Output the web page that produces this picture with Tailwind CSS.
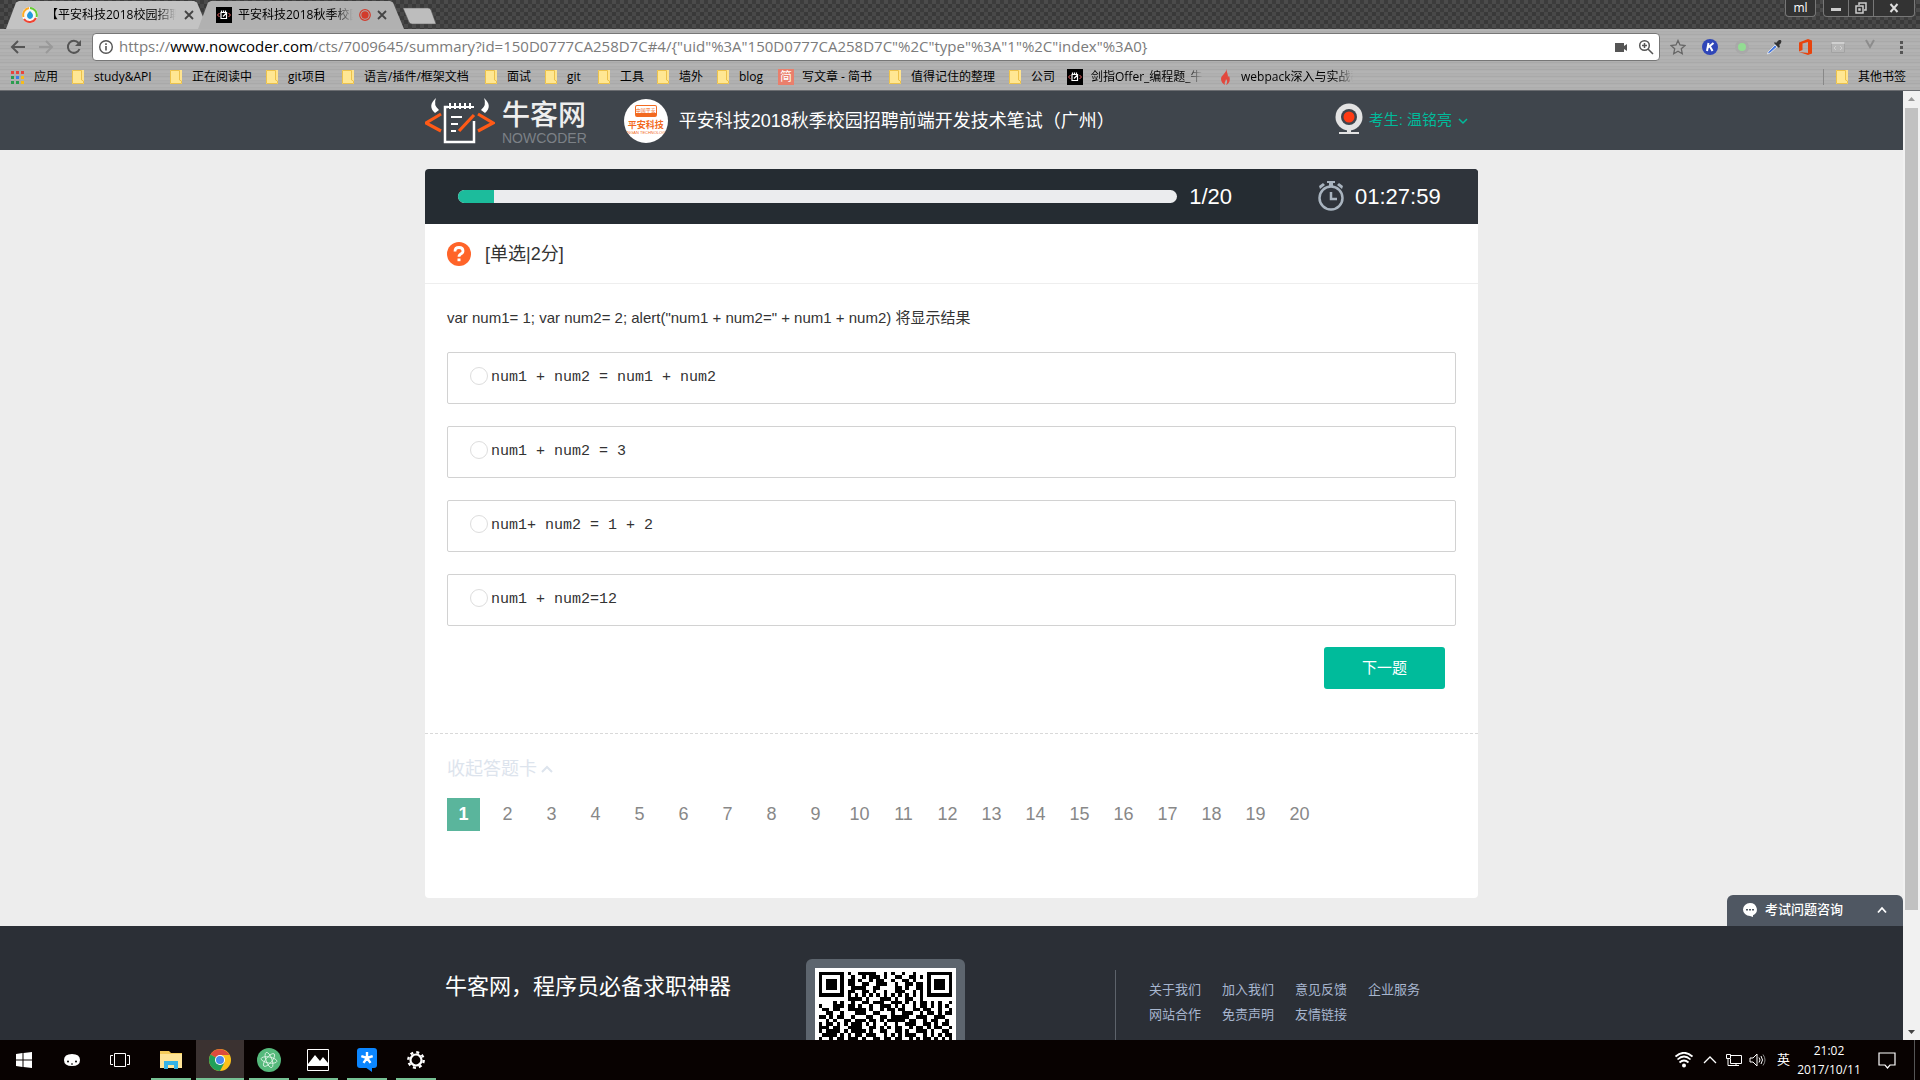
<!DOCTYPE html>
<html lang="zh-CN">
<head>
<meta charset="utf-8">
<title>平安科技2018秋季校园招聘前端开发技术笔试</title>
<script src="https://cdn.jsdelivr.net/npm/@tailwindcss/browser@4"></script>
</head>
<body class="flex h-screen flex-col overflow-hidden bg-[#ededed] font-['Liberation_Sans','Noto_Sans_CJK_SC',sans-serif] text-[#333]">

<svg class="hidden">
  <symbol id="folder" viewBox="0 0 16 16"><path d="M2 1h12v14H2z" fill="#ffe48f"/><path d="M2.5 1.500h9V11l2 1v2.500h-11z" fill="#ffe793" stroke="#ecc24c"/></symbol>
  <symbol id="nk" viewBox="0 0 16 16"><path d="M0 0h16v16H0z" fill="#000"/><path d="M5 5.500h5.500v6H5zM5.500 5V3.500M7.500 5V3.500M9.500 5V3.500M7 9.500l4-4" fill="none" stroke="#fff" stroke-width="1.200"/><path d="M3.500 6 1.500 8l2 2M12.500 6l2 2-2 2" fill="none" stroke="#e66"/></symbol>
  <symbol id="x" viewBox="0 0 10 10"><path d="m1 1 8 8M9 1 1 9" stroke="#444" stroke-width="1.800"/></symbol>
</svg>

<header class="shrink-0 font-['Open_Sans','Noto_Sans_CJK_SC',sans-serif] text-black">
  <!-- Tab strip -->
  <div class="flex h-[29px] justify-between bg-[conic-gradient(#4b4b4b_25%,#393939_0_50%,#484848_0_75%,#3c3c3c_0)] bg-[length:8px_8px]">
    <div class="flex pl-1.5 text-xs">
      <div class="mt-px flex w-[202px] items-center gap-2 bg-[#c3c3c3] pr-3.5 pl-4 [clip-path:polygon(0_100%,10px_5%,13px_0,188px_0,191px_5%,100%_100%)]">
        <svg class="size-4 shrink-0" viewBox="0 0 16 16"><circle cx="8" cy="8" r="8" fill="#f7f7f7"/><path d="M8 1a7 7 0 0 1 6.500 9" fill="none" stroke="#6c3" stroke-width="2"/><path d="M14 11a7 7 0 0 1-12 1" fill="none" stroke="#e43" stroke-width="2"/><path d="M1.500 10A7 7 0 0 1 7 1" fill="none" stroke="#fa2" stroke-width="2"/><path d="M8 4c4 3 4 7 0 8-4-1-4-5 0-8" fill="#29d"/></svg>
        <span class="w-[130px] overflow-hidden whitespace-nowrap [mask-image:linear-gradient(90deg,#000_85%,transparent)]">【平安科技2018校园招聘】</span>
        <svg class="size-2.5 shrink-0"><use href="#x"/></svg>
      </div>
      <div class="-ml-2.5 mt-px flex w-[206px] items-center gap-1.5 bg-[#b1b1b1] pr-4 pl-[18px] [clip-path:polygon(0_100%,10px_5%,13px_0,192px_0,195px_5%,100%_100%)]">
        <svg class="size-4 shrink-0"><use href="#nk"/></svg>
        <span class="w-[115px] overflow-hidden whitespace-nowrap [mask-image:linear-gradient(90deg,#000_85%,transparent)]">平安科技2018秋季校园招聘</span>
        <svg class="size-3 shrink-0" viewBox="0 0 12 12"><circle cx="6" cy="6" r="5.300" fill="none" stroke="#d23b2c" stroke-width="1.200"/><circle cx="6" cy="6" r="3.700" fill="#d23b2c"/></svg>
        <svg class="size-2.5 shrink-0"><use href="#x"/></svg>
      </div>
      <svg class="mt-[7px] -ml-0.5 h-[18px] w-[34px]" viewBox="0 0 34 18"><path d="M1 1h25q2 0 3 2l5 14H10q-2 0-3-2z" fill="#bdbdbd" stroke="#555" stroke-width=".5"/></svg>
    </div>
    <div class="flex h-[17px] gap-[7px] pr-[5px] text-xs text-white">
      <button class="w-[31px] rounded-b border border-t-0 border-[#777] bg-[#333] leading-4">ml</button>
      <div class="flex rounded-b border border-t-0 border-[#777] bg-[#333]">
        <button aria-label="最小化" class="flex w-[25px] items-center justify-center border-r border-[#777]"><svg class="size-3" viewBox="0 0 12 12"><path d="M1 6h10v3H1z" fill="#ccc"/></svg></button>
        <button aria-label="还原" class="flex w-[25px] items-center justify-center border-r border-[#777]"><svg class="size-3" viewBox="0 0 12 12"><path d="M4 3V1h7v7H9M1 4h7v7H1zM4 7h1v1H4z" fill="none" stroke="#ccc" stroke-width="1.500"/></svg></button>
        <button aria-label="关闭" class="flex w-10 items-center justify-center"><svg class="size-2.5" viewBox="0 0 10 10"><path d="m1.500 1 7 8M8.500 1l-7 8" stroke="#ddd" stroke-width="2"/></svg></button>
      </div>
    </div>
  </div>

  <div class="border-b border-[#6a6c70] bg-[repeating-linear-gradient(180deg,#b3b3b3_0_2px,#adadad_2px_3px,#b0b0b0_3px_5px,#a9a9a9_5px_6px,#b0b0b0_6px_7px)]">
    <!-- Address bar -->
    <div class="flex h-8 items-center pt-1 pr-3">
      <div class="flex w-[92px] items-center gap-3 pl-2.5">
        <svg class="size-4" viewBox="0 0 16 16"><path d="M15 8H2M8 2 2 8l6 6" fill="none" stroke="#555" stroke-width="2"/></svg>
        <svg class="size-4" viewBox="0 0 16 16"><path d="M1 8h13M8 2l6 6-6 6" fill="none" stroke="#999" stroke-width="2"/></svg>
        <svg class="size-4" viewBox="0 0 16 16"><path d="M13.500 10A6 6 0 1 1 12.500 4" fill="none" stroke="#555" stroke-width="2"/><path d="M15 1v6H9z" fill="#555"/></svg>
      </div>
      <div class="flex h-7 flex-1 items-center gap-[5px] rounded-sm border border-[#777] bg-white px-[5px]">
        <svg class="size-4 shrink-0" viewBox="0 0 16 16"><circle cx="8" cy="8" r="6.300" fill="none" stroke="#555" stroke-width="1.400"/><path d="M8 7v4.500M8 4.300v1.700" stroke="#555" stroke-width="1.600"/></svg>
        <p class="flex-1 whitespace-nowrap pb-0.5 text-[15px] leading-6 text-[#7b7b7b]">https://<span class="text-black">www.nowcoder.com</span>/cts/7009645/summary?id=150D0777CA258D7C#4/{"uid"%3A"150D0777CA258D7C"%2C"type"%3A"1"%2C"index"%3A0}</p>
        <svg class="size-4" viewBox="0 0 16 16"><path d="M2 4h9v3l3-2v7l-3-2v3H2z" fill="#555"/></svg>
        <svg class="ml-1 size-4" viewBox="0 0 16 16"><circle cx="6.500" cy="6.500" r="4.800" fill="none" stroke="#555" stroke-width="1.500"/><path d="m10 10 5 5M4 6.500h5M6.500 4v5" stroke="#555" stroke-width="1.500"/></svg>
      </div>
      <div class="flex items-center gap-4 pl-2.5">
        <svg class="size-4" viewBox="0 0 16 16"><path d="m8 1.500 2 4.500 5 .5-3.700 3.300 1 4.900L8 12.200l-4.300 2.500 1-4.900L1 6.500 6 6z" fill="none" stroke="#666" stroke-width="1.300"/></svg>
        <svg class="size-4" viewBox="0 0 16 16"><circle cx="8" cy="8" r="8" fill="#2f46b8"/><path d="M6.500 4 5 12M11.500 4 6 8.500M8 7.500 10.500 12" fill="none" stroke="#fff" stroke-width="2"/></svg>
        <svg class="size-4" viewBox="0 0 16 16"><circle cx="8" cy="8" r="7" fill="#a9a9a9"/><circle cx="8" cy="8" r="4" fill="#93dd93"/></svg>
        <svg class="size-4" viewBox="0 0 16 16"><path d="M9 6 2 13l-.5 2L4 14l7-6z" fill="#4a7be0" stroke="#eee" stroke-width=".8"/><path d="m8 4 5 5 1-2-1-1c3-2 3-5 1-5s-2 1-4 3L9 3z" fill="#333"/></svg>
        <svg class="size-4" viewBox="0 0 16 16"><path fill-rule="evenodd" d="M1 3.500 10 0l4 1.500v13L10 16l-9-3 9 1V3L4.500 4.500V11L1 12.500z" fill="#e8430c"/></svg>
        <svg class="size-4" viewBox="0 0 16 16"><path d="M1.500 3.500h13v10h-13z" fill="#b6b6b6" stroke="#a2a2a2"/><path d="M1.500 4h13" stroke="#d0d0d0" stroke-width="2"/><path d="m6 7-2 2 2 2M10 7l2 2-2 2" fill="none" stroke="#d0d0d0"/></svg>
        <svg class="size-4" viewBox="0 0 16 16"><path d="m4 1 4 7 4-7" fill="none" stroke="#8c8c8c" stroke-width="2"/></svg>
        <svg class="h-4 w-3.5" viewBox="0 0 14 16"><path d="M6 2h3v3H6zM6 7h3v3H6zM6 12h3v3H6z" fill="#555"/></svg>
      </div>
    </div>
    <!-- Bookmarks -->
    <nav class="flex h-[29px] items-center pt-0.5 pr-3.5 pl-2.5 text-xs whitespace-nowrap">
      <a href="#" class="flex w-[60px] items-center gap-2"><svg class="size-4" viewBox="0 0 16 16"><path d="M1 2h3v3H1zM6 2h3v3H6zM11 2h3v3h-3z" fill="#e8453c"/><path d="M1 7h3v3H1z" fill="#2a9d4e"/><path d="M6 7h3v3H6z" fill="#3b7de8"/><path d="M11 7h3v3h-3zM11 12h3v3h-3z" fill="#f5bc1b"/><path d="M1 12h3v3H1zM6 12h3v3H6z" fill="#2a9d4e"/></svg>应用</a>
      <a href="#" class="flex w-[98px] items-center gap-2"><svg class="size-4"><use href="#folder"/></svg>study&amp;API</a>
      <a href="#" class="flex w-24 items-center gap-2"><svg class="size-4"><use href="#folder"/></svg>正在阅读中</a>
      <a href="#" class="flex w-[76px] items-center gap-2"><svg class="size-4"><use href="#folder"/></svg>git项目</a>
      <a href="#" class="flex w-[143px] items-center gap-2"><svg class="size-4"><use href="#folder"/></svg>语言/插件/框架文档</a>
      <a href="#" class="flex w-[60px] items-center gap-2"><svg class="size-4"><use href="#folder"/></svg>面试</a>
      <a href="#" class="flex w-[53px] items-center gap-2"><svg class="size-4"><use href="#folder"/></svg>git</a>
      <a href="#" class="flex w-[59px] items-center gap-2"><svg class="size-4"><use href="#folder"/></svg>工具</a>
      <a href="#" class="flex w-[60px] items-center gap-2"><svg class="size-4"><use href="#folder"/></svg>墙外</a>
      <a href="#" class="flex w-[63px] items-center gap-2"><svg class="size-4"><use href="#folder"/></svg>blog</a>
      <a href="#" class="flex w-[109px] items-center gap-2"><span class="size-4 bg-[#ea7f6c] text-center text-xs leading-4 text-white">简</span>写文章 - 简书</a>
      <a href="#" class="flex w-[120px] items-center gap-2"><svg class="size-4"><use href="#folder"/></svg>值得记住的整理</a>
      <a href="#" class="flex w-[60px] items-center gap-2"><svg class="size-4"><use href="#folder"/></svg>公司</a>
      <a href="#" class="flex w-[150px] items-center gap-2"><svg class="size-4 shrink-0"><use href="#nk"/></svg><span class="w-28 overflow-hidden [mask-image:linear-gradient(90deg,#000_85%,transparent)]">剑指Offer_编程题_牛客</span></a>
      <a href="#" class="flex flex-1 items-center gap-2"><svg class="size-4 shrink-0" viewBox="0 0 16 16"><path d="M9 0c1 4-5 6-5 10 0 3 2 5 4 6-1-3 1-4 1-6 2 2 1 4 0 6 3-1 5-5 3-9-1 1-1 1-1 2 0-4-1-6-2-9" fill="#e2483d"/></svg><span class="w-28 overflow-hidden [mask-image:linear-gradient(90deg,#000_85%,transparent)]">webpack深入与实战教程</span></a>
      <span class="mr-2.5 h-4 w-px bg-[#888]"></span>
      <a href="#" class="flex items-center gap-2"><svg class="size-4"><use href="#folder"/></svg>其他书签</a>
    </nav>
  </div>
</header>

<div class="flex min-h-0 flex-1">
  <div class="min-w-0 flex-1 overflow-hidden">
    <!-- Site header -->
    <div class="bg-[#3f454c]">
      <div class="mx-auto flex h-[59px] max-w-[1053px] items-center">
        <a href="#" aria-label="牛客网" class="flex items-center gap-[7px]">
          <svg class="h-[50px] w-[70px]" viewBox="0 0 70 50"><g fill="none" stroke="#fff" stroke-width="2.500"><path d="M23 11h-3v35h29V25"/><path d="M23 11h26" stroke-width="2"/><path d="M25 7v6M30 7v6M35 7v6M40 7v6M45 7v6" stroke-width="2"/><path d="M26 21h11M26 28h7M26 35h5" stroke-width="2"/></g><path d="M11 2q-9 8-1 15l4-3Q8 9 11 2M59 2q9 8 1 15l-4-3q6-5 3-12" fill="#fff"/><path d="M16 18 1 27l15 8M53 18l15 9-15 8M34 35l15-16" fill="none" stroke="#ff5a17" stroke-width="3.200"/></svg>
          <span class="flex flex-col pt-1.5">
            <span class="text-[28px] leading-7 font-medium text-[#eee]">牛客网</span>
            <span class="text-sm leading-4 text-[#7c8187]">NOWCODER</span>
          </span>
        </a>
        <div class="ml-[37px] flex size-11 flex-col items-center overflow-hidden rounded-full bg-white pt-1.5 text-[#f26a21]">
          <span class="h-3 w-[22px] rounded-xs border border-b-4 border-[#f26a21] text-center text-[5px] leading-2">中国平安</span>
          <span class="mt-0.5 text-[9px] leading-3 font-bold whitespace-nowrap">平安科技</span>
          <span class="text-[4px] leading-1 whitespace-nowrap">PINGAN TECHNOLOGY</span>
        </div>
        <h1 class="ml-[11px] flex-1 text-lg text-white">平安科技2018秋季校园招聘前端开发技术笔试（广州）</h1>
        <button class="mr-2.5 flex items-center gap-1.5 text-[15px] text-[#00bb9b]">
          <svg class="mb-1 h-8 w-7" viewBox="0 0 28 32"><circle cx="14" cy="14" r="13.500" fill="#e3e3e3"/><path d="M12 26h4v3h8v2H4v-2h8z" fill="#e3e3e3"/><circle cx="14" cy="14" r="8" fill="#3f454c"/><circle cx="14" cy="14" r="5.500" fill="#ff3b14"/></svg>
          <span>考生: 温铭亮</span>
          <svg class="size-2.5" viewBox="0 0 10 10"><path d="m1 3 4 4 4-4" fill="none" stroke="currentColor" stroke-width="1.500"/></svg>
        </button>
      </div>
    </div>

    <!-- Question card -->
    <main class="mx-auto mt-[19px] max-w-[1053px] overflow-hidden rounded-[4px] bg-white">
      <div class="flex h-[55px] bg-[#252c32] text-[22px] text-white">
        <div class="flex flex-1 items-center gap-3 pr-12 pl-[33px]">
          <div class="h-[13px] flex-1 overflow-hidden rounded-full bg-[#ebecee]"><div class="h-full bg-[#1cbc9c]" style="width:5%"></div></div>
          <span>1/20</span>
        </div>
        <div class="flex w-[198px] items-center gap-2.5 bg-[#2f343b] pl-[37px]">
          <svg class="mb-0.5 h-[31px] w-7" viewBox="0 0 28 31"><circle cx="14" cy="18" r="11.500" fill="none" stroke="#a9b4bf" stroke-width="2.500"/><path d="M14 12v7h6" fill="none" stroke="#a9b4bf" stroke-width="2.500"/><path d="M10 1h8v2h-2v3h-4V3h-2zM2 6l4-3 2 2-5 4zM26 6l-4-3-2 2 5 4z" fill="#a9b4bf"/></svg>
          <span>01:27:59</span>
        </div>
      </div>
      <h2 class="flex h-[60px] items-center gap-3.5 border-b border-[#eee] pl-[22px] text-lg">
        <svg class="size-6" viewBox="0 0 24 24"><circle cx="12" cy="12" r="12" fill="#ff6429"/><path d="M8 9.500q0-4 4-4t4 3.500q0 2-2.300 3Q12 13 12 14.800" fill="none" stroke="#fff" stroke-width="2.800"/><path d="M10.500 16.500h3v2.700h-3z" fill="#fff"/></svg>
        [单选|2分]
      </h2>
      <div class="px-[22px] pt-6">
        <p class="text-[15px] leading-5">var num1= 1; var num2= 2; alert("num1 + num2=" + num1 + num2) 将显示结果</p>
        <form>
          <div class="mt-6 flex flex-col gap-[22px] font-['Liberation_Mono',monospace] text-[15px]">
            <label class="flex h-[52px] items-center gap-[3px] rounded-xs border border-[#d2d2d2] pb-1 pl-[22px] whitespace-pre"><input type="radio" name="answer" class="size-[18px] appearance-none rounded-full border border-[#ddd] bg-white checked:border-[5px] checked:border-[#00bb9b]"><span class="pt-1">num1 + num2 = num1 + num2</span></label>
            <label class="flex h-[52px] items-center gap-[3px] rounded-xs border border-[#d2d2d2] pb-1 pl-[22px] whitespace-pre"><input type="radio" name="answer" class="size-[18px] appearance-none rounded-full border border-[#ddd] bg-white checked:border-[5px] checked:border-[#00bb9b]"><span class="pt-1">num1 + num2 = 3</span></label>
            <label class="flex h-[52px] items-center gap-[3px] rounded-xs border border-[#d2d2d2] pb-1 pl-[22px] whitespace-pre"><input type="radio" name="answer" class="size-[18px] appearance-none rounded-full border border-[#ddd] bg-white checked:border-[5px] checked:border-[#00bb9b]"><span class="pt-1">num1+ num2 = 1 + 2</span></label>
            <label class="flex h-[52px] items-center gap-[3px] rounded-xs border border-[#d2d2d2] pb-1 pl-[22px] whitespace-pre"><input type="radio" name="answer" class="size-[18px] appearance-none rounded-full border border-[#ddd] bg-white checked:border-[5px] checked:border-[#00bb9b]"><span class="pt-1">num1 + num2=12</span></label>
          </div>
          <div class="flex justify-end pt-[21px] pr-[11px] pb-11"><button type="button" class="h-[42px] w-[121px] rounded-[3px] bg-[#00bb9b] text-[15px] text-white">下一题</button></div>
        </form>
      </div>
      <div class="border-t border-dashed border-[#d9d9d9] px-[22px] pt-[21px] pb-[67px]">
        <button class="flex items-center gap-1 text-lg text-[#dde4ed]">收起答题卡 <svg class="size-3" viewBox="0 0 12 12"><path d="m1 9 5-5 5 5" fill="none" stroke="currentColor" stroke-width="2"/></svg></button>
        <nav id="card" class="mt-[15px] flex gap-[11px] text-lg text-[#888]"></nav>
      </div>
    </main>

    <div class="relative h-7">
      <button class="absolute right-0 bottom-0 flex h-[31px] w-44 items-center rounded-t-md bg-[#4f5762] px-4 pb-px text-[13px] font-medium text-white">
        <svg class="mr-2 size-3.5" viewBox="0 0 14 14"><path d="M7 0a7 6.500 0 0 1 3 12.300V14l-3-1A7 6.500 0 0 1 7 0" fill="#fff"/><path d="M3 6h2v1.500H3zM6 6h2v1.500H6zM9 6h2v1.500H9z" fill="#4f5762"/></svg>
        考试问题咨询
        <svg class="ml-auto size-2.5" viewBox="0 0 10 10"><path d="m1 7.500 4-4.500 4 4.500" fill="none" stroke="#fff" stroke-width="1.800"/></svg>
      </button>
    </div>

    <footer class="h-60 bg-[#2b2f36]">
      <div class="mx-auto flex max-w-[1053px] pt-[33px]">
        <p class="w-[381px] pt-3 pl-5 text-[22px] leading-8 text-white">牛客网，程序员必备求职神器</p>
        <div class="h-[159px] w-[159px] rounded-md bg-[#5d656e] p-[9px]">
          <svg id="qr" class="size-full bg-white" viewBox="-1 -1 39 39" shape-rendering="crispEdges"></svg>
        </div>
        <ul class="mt-[11px] ml-[150px] grid h-40 grid-cols-4 content-start gap-x-[21px] border-l border-[#5d636b] pt-[7px] pl-[33px] text-[13px] leading-[25px] text-[#a7b6cf]">
          <li><a href="#">关于我们</a></li><li><a href="#">加入我们</a></li><li><a href="#">意见反馈</a></li><li><a href="#">企业服务</a></li>
          <li><a href="#">网站合作</a></li><li><a href="#">免责声明</a></li><li><a href="#">友情链接</a></li>
        </ul>
      </div>
    </footer>
  </div>
  <!-- Scrollbar -->
  <div class="flex w-[17px] shrink-0 flex-col items-center bg-[#f1f1f1]">
    <svg class="size-[17px]" viewBox="0 0 17 17"><path d="m5 10 3.500-4 3.500 4z" fill="#999"/></svg>
    <div class="w-[13px] flex-[802] bg-[#c1c1c1]"></div>
    <div class="flex-[113]"></div>
    <svg class="size-[17px]" viewBox="0 0 17 17"><path d="m5 7 3.500 4L12 7z" fill="#444"/></svg>
  </div>
</div>

<!-- Taskbar -->
<div class="flex h-10 shrink-0 items-stretch bg-[#080201] font-['Open_Sans','Noto_Sans_CJK_SC',sans-serif] text-white">
  <button aria-label="开始" class="flex w-12 items-center justify-center"><svg class="size-4" viewBox="0 0 16 16"><path d="m0 2 6.500-1v6.500H0zM7.500 1 16 0v7.500H7.500zM0 8.500h6.500V15L0 14zM7.500 8.500H16V16l-8.500-1z" fill="#fff"/></svg></button>
  <button aria-label="小娜" class="flex w-12 items-center justify-center"><svg class="size-4" viewBox="0 0 16 16"><path d="M8 2q8 0 8 6t-8 6-8-6 8-6" fill="#fff"/><circle cx="4" cy="9.500" r="1" /><circle cx="12" cy="9.500" r="1"/><path d="M7 11.500h2v1H7z"/></svg></button>
  <button aria-label="任务视图" class="mr-[3px] flex w-12 items-center justify-center"><svg class="h-4 w-5" viewBox="0 0 20 16"><path d="M4.500 1.500h11v13h-11zM3 3.500H.5v9H3M17 3.500h2.500v9H17" fill="none" stroke="#fff"/></svg></button>
  <div class="flex gap-px">
    <button aria-label="资源管理器" class="flex w-12 flex-col items-center"><svg class="mt-2 mb-auto size-[22px]" viewBox="0 0 22 22"><path d="M0 3h9l2 2h11v15H0z" fill="#f5cc5a"/><path d="M0 6h22v14H0z" fill="#ffe597"/><path d="M4 13h14v8h-4v-4H8v4H4z" fill="#35b3e6"/></svg><span class="h-0.5 w-10 bg-[#76c093]"></span></button>
    <button aria-label="Chrome" class="flex w-12 flex-col items-center bg-[#3b3231]"><svg class="mt-[9px] mb-auto size-[22px]" viewBox="0 0 22 22"><circle cx="11" cy="11" r="11" fill="#fbc11b"/><path d="M11 11 1.500 5.500A11 11 0 0 1 20.500 6H11z" fill="#dd4b3e"/><path d="M1.500 5.500A11 11 0 0 0 11 22l4.500-8.500L11 11z" fill="#21a05a"/><circle cx="11" cy="11" r="5" fill="#fff"/><circle cx="11" cy="11" r="4" fill="#4787f0"/></svg><span class="h-0.5 w-12 bg-[#76c093]"></span></button>
    <button aria-label="Atom" class="flex w-12 flex-col items-center"><svg class="mt-2 mb-auto size-6" viewBox="0 0 24 24"><circle cx="12" cy="12" r="12" fill="#55b97b"/><g fill="none" stroke="#e4f5ea" stroke-width=".8"><ellipse cx="12" cy="12" rx="8" ry="3" transform="rotate(10 12 12)"/><ellipse cx="12" cy="12" rx="8" ry="3" transform="rotate(70 12 12)"/><ellipse cx="12" cy="12" rx="8" ry="3" transform="rotate(130 12 12)"/></g></svg><span class="h-0.5 w-10 bg-[#76c093]"></span></button>
    <button aria-label="照片" class="flex w-12 flex-col items-center"><svg class="mt-[9px] mb-auto size-[22px]" viewBox="0 0 22 22"><path d="M.5.500h21v21H.5z" fill="none" stroke="#fff"/><path d="M1 15 8 6l5 6 3-4 5 6v3H1z" fill="#fff"/></svg><span class="h-0.5 w-10 bg-[#76c093]"></span></button>
    <button aria-label="星标应用" class="flex w-12 flex-col items-center"><svg class="mt-2 mb-auto h-6 w-5" viewBox="0 0 20 24"><rect width="20" height="20" rx="3" fill="#0b86ff"/><path d="M8 19h7v5z" fill="#0b86ff"/><path d="M10 10V4M10 10l-5.700-1.900M10 10l5.700-1.900M10 10l3.500 4.900M10 10l-3.500 4.900" stroke="#fff" stroke-width="2.400"/></svg><span class="h-0.5 w-10 bg-[#76c093]"></span></button>
    <button aria-label="设置" class="flex w-12 flex-col items-center"><svg class="mt-[11px] mb-auto size-[18px]" viewBox="0 0 18 18"><circle cx="9" cy="9" r="5.500" fill="none" stroke="#fff" stroke-width="2.200"/><circle cx="9" cy="9" r="7.700" fill="none" stroke="#fff" stroke-width="2.400" stroke-dasharray="3 3.050"/></svg><span class="h-0.5 w-10 bg-[#76c093]"></span></button>
  </div>
  <div class="ml-auto flex items-center gap-2.5 text-xs">
    <svg class="h-4 w-[18px]" viewBox="0 0 18 16"><circle cx="9" cy="13.500" r="2" fill="#fff"/><path d="M4.500 10.500q4.500-4 9 0M2.500 7.500q6.500-6 13 0M.5 4.500q8.500-7.500 17 0" fill="none" stroke="#fff" stroke-width="1.700"/></svg>
    <svg class="h-3 w-3.5" viewBox="0 0 14 12"><path d="m1 9 6-6 6 6" fill="none" stroke="#fff" stroke-width="1.300"/></svg>
    <svg class="-ml-0.5 h-4 w-[18px]" viewBox="0 0 18 16"><path d="M6 3.500h10.500v8H5.500V7M3 7v6.500h11M11 12v2M1.500 2.500h4v4h-4z" fill="none" stroke="#fff"/></svg>
    <svg class="-ml-1 h-4 w-[18px]" viewBox="0 0 18 16"><path d="M1 6h3l4-4v12l-4-4H1zM10 5.500q2 2.500 0 5M12 4q3 4 0 8" fill="none" stroke="#fff"/><path d="M14 2.500q4 5.500 0 11" fill="none" stroke="#888"/></svg>
    <span class="text-[13px]">英</span>
    <div class="-ml-1 w-[66px] text-center leading-[19px]"><p>21:02</p><p>2017/10/11</p></div>
    <svg class="ml-1.5 size-[18px]" viewBox="0 0 18 18"><path d="M1 2h16v12h-5l-2.500 3L7 14H1z" fill="none" stroke="#fff" stroke-width="1.200"/></svg>
    <span class="ml-2 h-10 w-1.5 border-l border-[#555]"></span>
  </div>
</div>

<script>
  // Answer card: one link per question
  const card = document.getElementById('card');
  for (let i = 1; i <= 20; i++) {
    const a = document.createElement('a');
    a.href = '#' + i;
    a.textContent = i;
    a.className = i === 1
      ? 'flex size-[33px] items-center justify-center bg-[#5ab59c] pb-px font-bold text-white'
      : 'flex size-[33px] items-center justify-center pb-px';
    card.append(a);
  }
  // QR code modules, one string per row
  const rows = [
    '1111111.1..11111..1.1..1..1...1111111','1.....1..1..1.111.1..11..11.1.1.....1',
    '1.111.1.11.1..1.11..1..11.1...1.111.1','1.111.1.11..11..111..1..11.11.1.111.1',
    '1.111.1..1111..11....11.1..11.1.111.1','1.....1.11..11.1..1..111..1.1.1.....1',
    '1111111.1.1.1.1.1.1.1.1.1.1.1.1111111','........1111.1...111.1..11..1........',
    '....1.1..1..11.111..111.1.1.11.1.1..1','1...111.11.1..1..111.1.1..1.11.1.1.1.',
    '.11.11..11111.1..1.11.11..11.11..1..1','..11..1...111..11...1..111..1.11.1.11',
    '11.1.11..1...11..11.11111..111..111..','..1.1..11.111.11.1.11111.11..1.11..1.',
    '1.11.1.1.111.1.1..1..1..111..11.1.11.','111.11..1111..11.1.1.11..1.11.1.11..1',
    '1.1111.1.1111.1..11..11.1..111.1..11.','.1111.1.1.11.111..1.1.1.111..1.1.1.11',
    '1..1.11.111.1..11.11.11..1.1.11.1.1.1','.11.1.1..1.11.1..11.1.11.1.1..1.11.11'
  ];
  let d = '';
  rows.forEach((r, y) => [...r].forEach((c, x) => { if (c === '1') d += `M${x} ${y}h1v1h-1z`; }));
  document.getElementById('qr').innerHTML = `<path d="${d}" fill="#000"/>`;
</script>
</body>
</html>
